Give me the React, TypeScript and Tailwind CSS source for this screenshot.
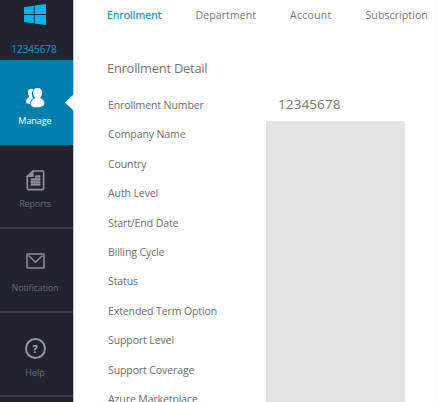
import React from "react";

const tabs = [
  { label: "Enrollment", cls: "w-[88.5px] text-[#1493b8] tracking-[0.05px] [-webkit-text-stroke:0.25px_#1493b8]" },
  { label: "Department", cls: "w-[94.5px] tracking-[0.1px]" },
  { label: "Account", cls: "w-[75.5px] tracking-[0.25px]" },
  { label: "Subscription", cls: "tracking-[0.1px]" },
];

const fields = [
  "Enrollment Number",
  "Company Name",
  "Country",
  "Auth Level",
  "Start/End Date",
  "Billing Cycle",
  "Status",
  "Extended Term Option",
  "Support Level",
  "Support Coverage",
  "Azure Marketplace",
];

function WindowsLogo() {
  return (
    <svg className="mt-1 mr-[3px] h-[21px] w-[22px]" viewBox="0 0 22 21" fill="#00b4f1">
      <path d="M0 3.2 9.8 1.7V10H0zM10.6 1.5 22 0v10H10.6zM0 10.900h9.800v8.400L0 17.900zM10.600 10.900H22V21l-11.400-1.600z" />
    </svg>
  );
}

function PeopleIcon() {
  return (
    <svg className="h-5 w-[19px]" viewBox="0 0 19 20" fill="#fff">
      <path d="M5.200.8C3 .8 1.900 2.300 1.900 4.400c0 1.500.5 2.600 1.200 3.400v1.100C1.400 9.800 0 11.600 0 13.800c0 1.300 1.500 2.100 3.900 2.200.1-2.700 1.200-4.500 3.400-5.700-.9-1.100-1.400-2.700-1.400-4.300 0-1.800.6-3.300 1.500-4.200A3 3 0 0 0 5.200.8z" />
      <path d="M11.600 0C8.900 0 7 2 7 4.700c0 2.200.9 3.800 2.100 4.700v1.100c-2.700.9-4.500 2.900-4.500 5.400 0 2.100 3 3.400 6.800 3.400 4 0 7-1.200 7-3.500 0-2.700-1.700-4.700-4-5.500V9.200c1-.9 1.700-2.500 1.700-4.500C16.100 2 14.300 0 11.600 0z" />
    </svg>
  );
}

function ReportIcon() {
  return (
    <svg className="h-[21px] w-[19px]" viewBox="0 0 19 21" fill="none" stroke="#8e9097" strokeWidth="1.7">
      <path d="M7 1h9.200Q17.600 1 17.600 2.400v15.800q0 1.400-1.400 1.400H2.700q-1.400 0-1.400-1.400V6.300z" />
      <path d="M7 1v5.300H1.300z" strokeWidth="1.200" fill="#8e9097" />
      <path d="M9.200 5.300h5.100v10.200H4.700V8.500h4.500z" fill="#70727a" stroke="none" />
      <path d="M9.200 6.300h5.100M4.700 9.300h9.600M4.700 12.100h9.600M4.700 14.800h9.600" strokeWidth="1.400" />
    </svg>
  );
}

function MailIcon() {
  return (
    <svg className="h-4 w-[19px]" viewBox="0 0 19 16" fill="none" stroke="#8e9097" strokeWidth="1.5">
      <rect x="1" y="1" width="17" height="14" rx=".5" />
      <path d="m2.500 2.500 7 6.700 7-6.700" />
    </svg>
  );
}

function HelpIcon() {
  return (
    <span className="flex size-[21px] items-center justify-center rounded-full border-2 border-[#96979c] text-[11px] leading-none font-bold text-[#b0b1b5]">
      ?
    </span>
  );
}

export default function App() {
  return (
    <div className="flex h-[402px] w-[436px] overflow-hidden bg-white font-['Open_Sans','Noto_Sans',sans-serif] text-[#757575]">
      <aside className="flex w-[74px] shrink-0 flex-col border-r border-[#c6c7ca] bg-[#21232f] text-[9px] leading-3 text-[#6a6c73]">
        <div className="flex h-[60px] shrink-0 flex-col items-center">
          <WindowsLogo />
          <span className="mt-[18px] pr-[5px] text-[10px] tracking-[-0.05px] text-[#118fbd] [-webkit-text-stroke:0.2px_#118fbd]">12345678</span>
        </div>
        <div className="relative flex h-[85px] shrink-0 flex-col items-center bg-[#007fae] pt-7 pr-[3px] text-white">
          <PeopleIcon />
          <span className="mt-[7px] tracking-[-0.05px]">Manage</span>
          <span className="absolute top-[34px] -right-px h-[17px] w-[9px] bg-white [clip-path:polygon(100%_0,0_50%,100%_100%)]" />
        </div>
        <div className="flex h-[84px] shrink-0 flex-col items-center border-b-2 border-[#363842] pt-[25px] pr-[3px]">
          <ReportIcon />
          <span className="mt-[7px] tracking-[-0.15px]">Reports</span>
        </div>
        <div className="flex h-[84px] shrink-0 flex-col items-center border-b-2 border-[#363842] pt-6 pr-[3px]">
          <MailIcon />
          <span className="mt-[13px] tracking-[-0.15px]">Notification</span>
        </div>
        <div className="flex h-[84px] shrink-0 flex-col items-center border-b-2 border-[#363842] pt-[25px] pr-[3px]">
          <HelpIcon />
          <span className="mt-2">Help</span>
        </div>
      </aside>
      <main className="min-w-0 flex-1 border-r border-[#f7f7f7] pl-[33px]">
        <nav className="flex h-[31px] items-center text-[10.5px] whitespace-nowrap">
          {tabs.map((t) => (
            <span key={t.label} className={`shrink-0 ${t.cls}`}>{t.label}</span>
          ))}
        </nav>
        <h1 className="mt-[27px] text-[13px] leading-5 tracking-[-0.3px]">Enrollment Detail</h1>
        <div className="mt-3 flex pl-px">
          <div className="w-[158px] shrink-0 pt-px text-[10.5px] tracking-[-0.1px] text-[#6b6b6b]">
            {fields.map((f) => (
              <div key={f} className="flex h-[29.45px] items-center">{f}</div>
            ))}
          </div>
          <div className="w-[139px]">
            <div className="flex h-[31px] items-center pb-0.5 pl-3 text-[13.5px] tracking-[0.1px]">12345678</div>
            <div className="h-[281px] bg-[#e4e4e4]" />
          </div>
        </div>
      </main>
    </div>
  );
}
